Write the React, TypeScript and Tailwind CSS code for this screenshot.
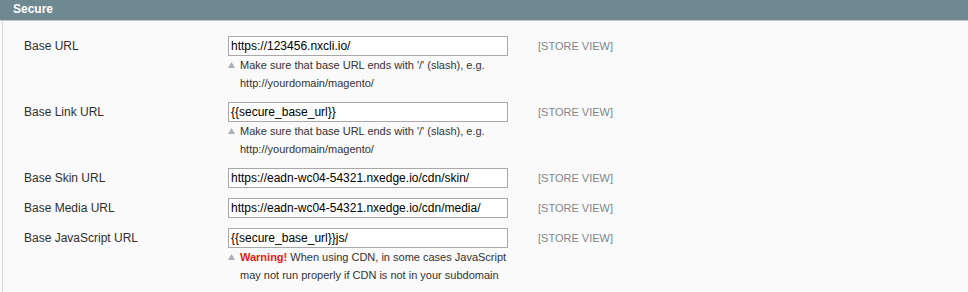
import React from 'react';

interface Field {
  label: string;
  value: string;
  hint?: React.ReactNode;
}

const slashHint = (
  <>
    Make sure that base URL ends with '/' (slash), e.g.
    <br />
    http://yourdomain/magento/
  </>
);

const fields: Field[] = [
  { label: 'Base URL', value: 'https://123456.nxcli.io/', hint: slashHint },
  { label: 'Base Link URL', value: '{{secure_base_url}}', hint: slashHint },
  { label: 'Base Skin URL', value: 'https://eadn-wc04-54321.nxedge.io/cdn/skin/' },
  { label: 'Base Media URL', value: 'https://eadn-wc04-54321.nxedge.io/cdn/media/' },
  {
    label: 'Base JavaScript URL',
    value: '{{secure_base_url}}js/',
    hint: (
      <>
        <span className="font-bold text-[#e41b13]">Warning!</span> When using CDN, in some cases JavaScript
        <br />
        may not run properly if CDN is not in your subdomain
      </>
    ),
  },
];

function Triangle() {
  return (
    <svg width="7" height="6" viewBox="0 0 7 6" className="mt-[6px] mr-[5px] shrink-0">
      <path d="M3.5 0 L7 6 L0 6 Z" fill="#a9b1b6" />
    </svg>
  );
}

export default function App() {
  return (
    <div className="w-[968px] h-[292px] bg-[#fafafa] text-[12px] text-[#2f2f2f]" style={{ fontFamily: '"Liberation Sans", Arial, sans-serif' }}>
      <div className="h-[20px] bg-[#6f8992] pl-[13px] text-white font-bold leading-[19px]">Secure</div>
      <div className="h-[1px] bg-[#c4ccd2]" />
      <div className="ml-[2px] border-l border-[#d4d4d4] h-[271px] pt-[10px]">
        {fields.map((f) => (
          <div key={f.label} className="flex pt-[5px] pb-[5px]">
            <div className="w-[225px] pl-[21px] leading-[20px]">{f.label}</div>
            <div className="w-[310px]">
              <div className="w-[280px] h-[20px] border border-[#a8a8a8] bg-white pl-[2px] leading-[18px] text-black">
                {f.value}
              </div>
              {f.hint && (
                <div className="flex text-[11px] leading-[18px] text-[#333]">
                  <Triangle />
                  <div>{f.hint}</div>
                </div>
              )}
            </div>
            <div className="leading-[20px] text-[11px] text-[#7f878c]">[STORE VIEW]</div>
          </div>
        ))}
      </div>
    </div>
  );
}
